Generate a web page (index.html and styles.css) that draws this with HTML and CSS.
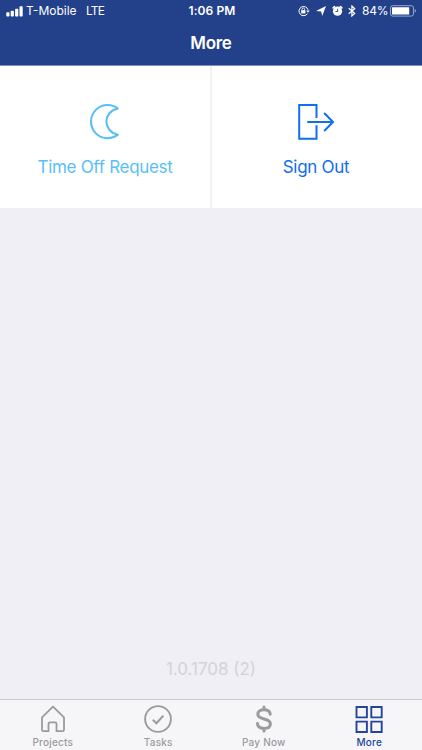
FILE: index.html
```html
<!DOCTYPE html>
<html lang="en">
<head>
<meta charset="utf-8">
<title>More</title>
<link rel="stylesheet" href="styles.css">
</head>
<body>
<div class="app">
  <header class="header">
    <div class="status">
      <div class="status-left">
        <svg class="signal" width="17" height="11" viewBox="0 0 17 11" fill="#fff"><rect x="0.3" y="6.3" width="3.2" height="4.2" rx=".8"/><rect x="4.7" y="4.8" width="3.2" height="5.7" rx=".8"/><rect x="9.1" y="2.8" width="3.2" height="7.7" rx=".8"/><rect x="13.5" y=".3" width="3.2" height="10.2" rx=".8"/></svg>
        <span class="carrier">T-Mobile</span>
        <span class="network">LTE</span>
      </div>
      <div class="time">1:06 PM</div>
      <div class="status-right">
        <svg width="12" height="12" viewBox="0 0 12 12" fill="none" stroke="#fff"><path d="M9.4 8.7A4.6 4.6 0 1 1 10 4.7"/><path d="M8.3 5.6h3.4L10 7.8z" fill="#fff" stroke="none"/><rect x="3.2" y="5.2" width="4.2" height="3.2" fill="#fff" stroke="none"/><path d="M4 5.4V4.3a1.3 1.3 0 0 1 2.6 0v1.1" stroke-width=".8"/></svg>
        <svg class="location" width="10" height="10" viewBox="0 0 10 10" fill="#fff"><path d="M10 0 6.2 10 5.2 5.5 0 5z"/></svg>
        <svg class="alarm" width="11" height="12" viewBox="0 0 11 12"><circle cx="5.5" cy="6.2" r="4.6" fill="#fff"/><path d="M1.2 2.8 2.5 1.6M9.8 2.8 8.5 1.6" stroke="#fff" stroke-width="1.7" stroke-linecap="round"/><path d="M5.6 3.8v2.7H3.5" stroke="#23418a" fill="none" stroke-width=".9"/></svg>
        <svg class="bluetooth" width="8" height="12" viewBox="0 0 8 12" fill="none" stroke="#fff" stroke-width="1.2"><path d="m.7 3.3 6 5L3.9 11V1l2.8 2.7-6 5"/></svg>
        <span class="percent">84%</span>
        <svg class="battery" width="26" height="12" viewBox="0 0 26 12"><rect x=".5" y=".7" width="23" height="10.4" rx="2.2" fill="none" stroke="#a4b3d4" stroke-width=".9"/><rect x="2" y="2.2" width="17.2" height="7.4" rx=".6" fill="#fff"/><path d="M24.7 4.1q1.2.5 1.2 1.8t-1.2 1.8z" fill="#a4b3d4"/></svg>
      </div>
    </div>
    <h1 class="title">More</h1>
  </header>
  <main class="content">
    <div class="tiles">
      <a class="tile time-off">
        <svg width="34" height="38" viewBox="0 0 34 38" fill="none" stroke="currentColor" stroke-width="2.1" stroke-linejoin="round"><path d="M30.8 5.5A16.6 16.6 0 1 0 30.8 31.7C15.6 28.5 15.6 8.7 30.8 5.5z"/></svg>
        <span class="tile-label">Time Off Request</span>
      </a>
      <a class="tile sign-out">
        <svg width="38" height="38" viewBox="0 0 38 38" fill="none" stroke="currentColor" stroke-width="2"><path d="M19.5 15V2H2.2v33.8h17.3V22.3"/><path d="M11 19h25M27.7 10.5 36 19l-8.3 8.5" stroke-linecap="round" stroke-linejoin="round"/></svg>
        <span class="tile-label">Sign Out</span>
      </a>
    </div>
    <div class="version">1.0.1708 (2)</div>
  </main>
  <nav class="tabs">
    <a class="tab">
      <svg width="28" height="28" viewBox="0 0 28 28" fill="none" stroke="currentColor" stroke-width="1.8" stroke-linejoin="round"><path d="M14 1.6 3 12.3v12.4q0 1.5 1.5 1.5h5V18.7q0-1.3 1.3-1.3h5.4q1.3 0 1.3 1.3v7.5h6q1.5 0 1.5-1.5V12.3z"/></svg>
      <span>Projects</span>
    </a>
    <a class="tab">
      <svg width="28" height="28" viewBox="0 0 28 28" fill="none" stroke="currentColor" stroke-width="1.9"><circle cx="14" cy="14" r="12.9"/><path d="m8.8 14.8 3.6 3.5 7-7.7" stroke-width="2.1"/></svg>
      <span>Tasks</span>
    </a>
    <a class="tab">
      <svg width="28" height="28" viewBox="0 0 28 28" fill="none" stroke="currentColor" stroke-width="3" stroke-linecap="round"><path d="M20.2 9.2C20 6.2 17.6 4.7 14 4.7S7.8 6.4 7.8 9.3c0 6.2 12.6 3.1 12.6 9.4 0 2.9-2.5 4.7-6.4 4.7s-6.4-1.8-6.6-5M14 2v2.6M14 23.5V26"/></svg>
      <span>Pay Now</span>
    </a>
    <a class="tab active">
      <svg width="28" height="28" viewBox="0 0 28 28" fill="none" stroke="currentColor" stroke-width="1.9"><path d="M1.5 2h10.4v10.4H1.5zM16.3 2h10.4v10.4H16.3zM1.5 16.6h10.4V27H1.5zM16.3 16.6h10.4V27H16.3z"/></svg>
      <span>More</span>
    </a>
  </nav>
</div>
</body>
</html>
```
FILE: styles.css
```css
* { box-sizing: border-box; }
body { margin: 0; font-family: Inter, "Liberation Sans", sans-serif; }
svg { display: block; flex: none; }
.app { width: 422px; height: 750px; display: flex; flex-direction: column; background: #efeff5; overflow: hidden; }
.header { height: 66px; flex: none; background: #23418a; border-bottom: 1px solid #8090bd; color: #fff; }
.status { height: 22px; display: grid; grid-template-columns: 1fr 50px 1fr; align-items: center; padding: 0 6px 0 6px; font-size: 12px; line-height: 22px; white-space: nowrap; }
.status-left, .status-right { display: flex; align-items: center; }
.carrier { margin-left: 3px; width: 50px; }
.network { margin-left: 10px; letter-spacing: -.8px; }
.time { padding-left: 2px; text-align: center; font-weight: 600; letter-spacing: .1px; }
.status-right { justify-content: flex-end; }
.location { margin-left: 6px; }
.alarm { margin-left: 6px; }
.bluetooth { margin-left: 5px; }
.percent { margin-left: 6px; width: 26px; letter-spacing: -.2px; }
.battery { margin-left: 2px; }
.title { margin: 10px 0 0; text-align: center; font-size: 17px; line-height: 23px; font-weight: 600; letter-spacing: -.3px; }
.content { flex: 1; display: flex; flex-direction: column; justify-content: space-between; }
.tiles { display: grid; grid-template-columns: 212px 210px; height: 142px; background: #fff; }
.tile { display: flex; flex-direction: column; align-items: center; padding-top: 37px; }
.time-off { color: #59bff5; border-right: 2px solid #f2f2f6; }
.sign-out { color: #0e6ff0; padding-right: 2px; }
.tile-label { margin-top: 14px; font-size: 17px; line-height: 24px; letter-spacing: -.3px; white-space: nowrap; }
.time-off svg { margin-right: 2px; }
.version { text-align: center; color: #d3d3d8; font-size: 17px; line-height: 24px; padding-bottom: 18px; }
.tabs { height: 51px; flex: none; display: grid; grid-template-columns: repeat(4, 1fr); background: #f6f6f9; border-top: 1px solid #c9c9ce; }
.tab { display: flex; flex-direction: column; align-items: center; padding-top: 5px; color: #9b9b9d; font-size: 10px; line-height: 14px; font-weight: 500; letter-spacing: .2px; }
.tab span { margin-top: 2px; }
.active { color: #23469a; }
```
